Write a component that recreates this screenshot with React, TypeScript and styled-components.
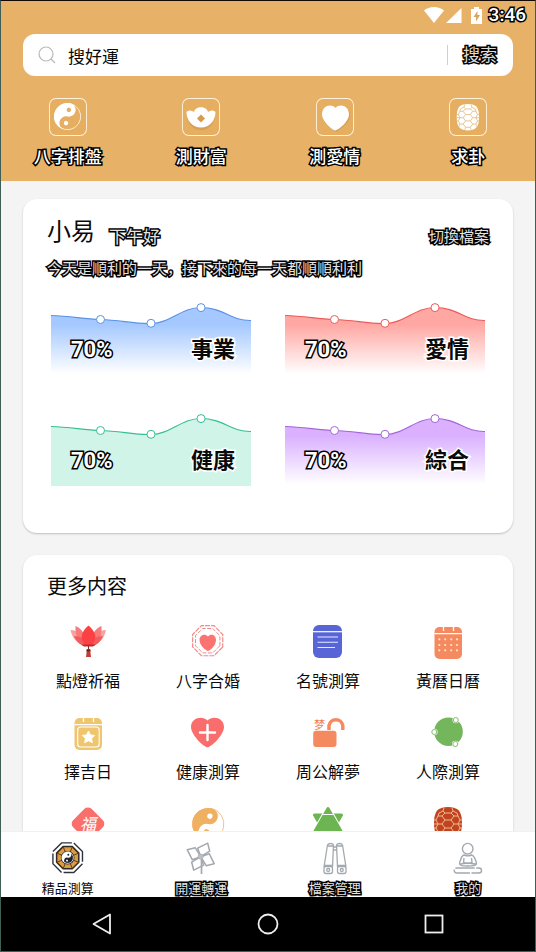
import React from "react";
import styled, { createGlobalStyle, css } from "styled-components";

const GlobalStyle = createGlobalStyle`
  * { box-sizing: border-box; }
  body {
    margin: 0;
    background: #f4f4f4;
    color: #0a0a0a;
    font-family: Roboto, "Noto Sans CJK SC", "Noto Sans CJK TC", sans-serif;
  }
  button, input { font: inherit; color: inherit; border: 0; padding: 0; margin: 0; background: none; }
  button { cursor: pointer; }
  svg { display: block; }
  h1, h2, p { margin: 0; font-weight: 400; }
`;

const outlined = css`
  -webkit-text-stroke: 3px #000;
  paint-order: stroke fill;
  stroke-linejoin: round;
`;

const Screen = styled.div`
  display: flex;
  flex-direction: column;
  height: 100vh;
  border: 1px solid #3f5e55;
  border-top-color: #140a04;
`;

const Header = styled.header`
  flex: none;
  background: #e7b267;
  padding-bottom: 12px;
`;

const StatusBar = styled.div`
  display: flex;
  align-items: center;
  justify-content: flex-end;
  height: 27px;
  padding-right: 9px;
`;

const StatusIcons = styled.svg`
  width: 60px;
  height: 18px;
  margin-right: 6px;
`;

const Clock = styled.time`
  font-size: 19px;
  font-weight: 500;
  line-height: 24px;
  color: #fff;
  ${outlined}
`;

const SearchBar = styled.form`
  display: flex;
  align-items: center;
  height: 42px;
  margin: 6px 22px 0;
  padding: 0 16px 0 15px;
  border-radius: 12px;
  background: #fff;
`;

const SearchInput = styled.input`
  flex: 1;
  min-width: 0;
  height: 32px;
  margin-left: 12px;
  font-size: 17px;
  outline: none;
`;

const SearchButton = styled.button`
  border-left: 1px solid #cfcfcf;
  height: 20px;
  padding-left: 15px;
  font-size: 17px;
  line-height: 20px;
  color: #ddd;
  ${outlined}
`;

const Shortcuts = styled.nav`
  display: grid;
  grid-template-columns: repeat(4, 1fr);
  margin-top: 22px;
`;

const Shortcut = styled.button`
  display: flex;
  flex-direction: column;
  align-items: center;
  gap: 9px;
  font-size: 17px;
  font-weight: 500;
  line-height: 24px;
  color: #fff;
  ${outlined}
`;

const Content = styled.main`
  flex: 1;
  min-height: 0;
  overflow-y: auto;
  scrollbar-width: none;
  display: flex;
  flex-direction: column;
  gap: 22px;
  padding: 18px 22px;
`;

const Card = styled.section`
  flex: none;
  border-radius: 14px;
  background: #fff;
  box-shadow: 0 1px 2px rgba(0, 0, 0, 0.22);
`;

const Greeting = styled.div`
  display: flex;
  align-items: flex-end;
  padding: 15px 24px 0;
  line-height: 26px;
`;

const UserName = styled.h1`
  font-size: 24px;
  line-height: 36px;
`;

const OutlinedText = styled.p<{ $size: number }>`
  font-size: ${(p) => p.$size}px;
  color: #e4e4e4;
  ${outlined}
`;

const Hello = styled(OutlinedText)`
  flex: 1;
  margin-left: 14px;
`;

const SwitchButton = styled.button`
  font-size: 15px;
  line-height: 26px;
  color: #e4e4e4;
  ${outlined}
`;

const Summary = styled(OutlinedText)`
  padding: 9px 24px 0;
  line-height: 20px;
`;

const ChartGrid = styled.div`
  display: grid;
  grid-template-columns: 1fr 1fr;
  gap: 35px 34px;
  padding: 21px 28px 46px;
`;

const ChartCell = styled.div`
  display: grid;
  > * { grid-area: 1 / 1; }
`;

const ChartCaption = styled.div`
  display: flex;
  justify-content: space-between;
  align-self: center;
  z-index: 1;
  padding: 24px 16px 0 20px;
  font-size: 22px;
  font-weight: 700;
  line-height: 28px;
`;

const Percent = styled.span`
  color: #fff;
  ${outlined}
`;

const Topic = styled.span`
  -webkit-text-stroke: 3px #fff;
  paint-order: stroke fill;
`;

const SectionTitle = styled.h2`
  padding: 18px 24px 0;
  font-size: 20px;
  line-height: 28px;
`;

const FeatureGrid = styled.div`
  display: grid;
  grid-template-columns: repeat(4, 1fr);
  row-gap: 20px;
  padding: 22px 5px;
`;

const Feature = styled.button`
  display: flex;
  flex-direction: column;
  align-items: center;
  gap: 11px;
  font-size: 16px;
  line-height: 24px;
`;

const TabBar = styled.nav`
  flex: none;
  display: grid;
  grid-template-columns: repeat(4, 1fr);
  padding-top: 9px;
  border-top: 1px solid #f0f0f0;
  background: #fff;
`;

const Tab = styled.button<{ $active?: boolean }>`
  display: flex;
  flex-direction: column;
  align-items: center;
  gap: 6px;
  font-size: 13px;
  line-height: 16px;
  ${(p) => (p.$active ? "" : css`color: #e4e4e4; ${outlined}`)}
`;

const SystemBar = styled.nav`
  flex: none;
  display: grid;
  grid-template-columns: 1fr 1fr 1fr;
  padding: 0 18px;
  height: 54px;
  background: #000;
`;

const SystemButton = styled.button`
  display: flex;
  align-items: center;
  justify-content: center;
`;

const Svg = ({ size, children }: { size: number; children: React.ReactNode }) => (
  <svg width={size} height={size} viewBox={`0 0 ${size} ${size}`} fill="none" aria-hidden="true">
    {children}
  </svg>
);

const octagon = (c: number, r: number) =>
  Array.from({ length: 8 }, (_, i) => {
    const a = ((i + 0.5) * Math.PI) / 4;
    return `${(c + r * Math.cos(a)).toFixed(2)},${(c + r * Math.sin(a)).toFixed(2)}`;
  }).join(" ");

const YinYang = ({ x, y, r, color, back }: { x: number; y: number; r: number; color: string; back: string }) => (
  <g transform={`translate(${x} ${y}) rotate(12)`}>
    <circle r={r - 0.3} stroke={color} strokeWidth={0.7} />
    <path
      d={`M0 ${-r}A${r} ${r} 0 0 0 0 ${r}A${r / 2} ${r / 2} 0 0 1 0 0A${r / 2} ${r / 2} 0 0 0 0 ${-r}Z`}
      fill={color}
    />
    <circle cy={-r / 2} r={r / 6} fill={back} />
    <circle cy={r / 2} r={r / 6} fill={color} />
  </g>
);

const Shell = ({ fill, line }: { fill: string; line: string }) => (
  <>
    <path d="M18 2c4 0 8 1 10.500 3C31 8 32 12 32 18s-1 11-4 14c-2 2-6 3-10 3s-8-1-10-3c-3-3-4-8-4-14s1-10 3.500-13C10 3 14 2 18 2Z" fill={fill} />
    <path
      d="M14 3l-1 3 2 2h6l2-2-1-3M15 8l-3 3 3 4h6l3-4-3-3M15 15l-3 4 3 4h6l3-4-3-4M15 23l-3 4 3 4h6l3-4-3-4M15 31l-1 3M21 31l1 3M12 11H8l-2 4 2 4h4M24 11h4l2 4-2 4h-4M8 19l-2 4 2 4h4M28 19l2 4-2 4h-4M13 6L9 8l-1 3M23 6l4 2 1 3M4 15h2M30 15h2M4 23h2M30 23h2M8 27l-1 3M28 27l1 3M8 19H4M28 19h4"
      stroke={line}
      strokeWidth="1"
      strokeLinejoin="round"
    />
  </>
);

const ShortcutFrame = ({ children }: { children: React.ReactNode }) => (
  <Svg size={38}>
    <rect x="1" y="1" width="36" height="36" rx="6" fill="#e5ae60" stroke="#fff3dd" strokeWidth="1.8" />
    {children}
  </Svg>
);

const shortcuts = [
  { label: "八字排盤", icon: <YinYang x={18.5} y={18.5} r={13.5} color="#fff" back="#e5ae60" /> },
  {
    label: "測財富",
    icon: (
      <>
        <path d="M5 15c2-3 5-3 7 0 1-8 13-8 14 0 2-3 5-3 7 0 0 8-5 16-14 16S5 23 5 15Z" fill="#c8924b" opacity=".5" transform="translate(0 1)" />
        <path d="M4.500 14c2-2 5-2 7.500 0 1-6.500 13-6.500 14 0 2.500-2 5.500-2 7.500 0 0 8-5.500 15.500-14.500 15.500S4.500 22 4.500 14Z" fill="#fff" />
        <path d="m19 16.500 4 4-4 4-4-4Z" fill="#d69b4c" />
      </>
    ),
  },
  {
    label: "測愛情",
    icon: (
      <>
        <path d="M20 34C14 30 6 24 6 17c0-8 10-10 14-4 4-6 14-4 14 4 0 7-8 13-14 17Z" fill="#c8924b" opacity=".6" />
        <path d="M19 32.500c-2 0-13-9-13-16C6 8 15 5 19.500 10 24 5 33 8 33 16.500c0 7-11 16-14 16Z" fill="#fff" />
      </>
    ),
  },
  {
    label: "求卦",
    icon: (
      <g transform="translate(4.500 4.500) scale(.8)">
        <Shell fill="#fff" line="#e5b878" />
      </g>
    ),
  },
];

const charts = [
  { label: "事業", line: "#5b93e6", top: "#a4c8ff", end: 0 },
  { label: "愛情", line: "#ec5a5a", top: "#ffa7a2", end: 0 },
  { label: "健康", line: "#35bf97", top: "#d0f4e8", end: 1 },
  { label: "綜合", line: "#a566dc", top: "#dab0ff", end: 0 },
];

const curve = "M0 15.500C20 16 32 19 49.500 19.500C70 20 82 24 100 23.500C120 23 130 7.500 150 7.500C172 7.500 180 21 200 20.500";

const TrendChart = ({ label, line, top, end }: (typeof charts)[number]) => (
  <ChartCell>
    <svg width="100%" viewBox="0 0 200 76" fill="none" aria-hidden="true">
      <defs>
        <linearGradient id={`fade-${label}`} x1="0" y1="0" x2="0" y2="1">
          <stop offset="0.250" stopColor={top} />
          <stop offset="0.980" stopColor={top} stopOpacity={end} />
        </linearGradient>
      </defs>
      <path d={`${curve}V75H0Z`} fill={`url(#fade-${label})`} />
      <path d={curve} stroke={line} strokeWidth="1.2" />
      {[[49.5, 19.5], [100, 23.3], [150, 7.6]].map(([x, y]) => (
        <circle key={x} cx={x} cy={y} r="4" fill="#fff" stroke={line} strokeWidth="1" />
      ))}
    </svg>
    <ChartCaption>
      <Percent>70%</Percent>
      <Topic>{label}</Topic>
    </ChartCaption>
  </ChartCell>
);

const features = [
  {
    label: "點燈祈福",
    icon: (
      <>
        <path d="M.5 7c8 0 13 6 13 15C6 20 2 14 .5 7ZM36 7c-8 0-13 6-13 15 8-2 11.500-8 13-15Z" fill="#f9a2a0" />
        <path d="M5.500 3C13 6 16 13 16 22 8 20 5 12 5.500 3ZM31.500 3C24 6 21 13 21 22c8-2 11-10 10.500-19Z" fill="#f77b7b" />
        <path d="M4 13c8 0 12 4 14 10-7 0-11-3-14-10ZM33 13c-8 0-12 4-14 10 7 0 11-3 14-10Z" fill="#f25c5d" />
        <path d="M18.500 2.500C24 7 26 12 25 16s-3 6.500-6.500 6.500S13 20 12 16s1-9 6.500-13.500Z" fill="#fb4144" />
        <path d="M11 21.500h15l-3 2h-9Z" fill="#bd282b" />
        <path d="M18.500 23v3" stroke="#7f2c25" />
        <path d="M17 26h3l1 8h-5Z" fill="#c23b35" />
        <path d="M16.500 27.500h4" stroke="#6d241d" strokeWidth="2" />
      </>
    ),
  },
  {
    label: "八字合婚",
    icon: (
      <>
        <polygon points={octagon(17.7, 16.3)} stroke="#f28a8a" strokeWidth="1.2" strokeDasharray="5 1" />
        <polygon points={octagon(17.7, 13.2)} stroke="#f28a8a" strokeWidth="1" strokeDasharray="4 1.500" />
        <path d="M18 28C15 27 9.500 22 9.500 17c0-5 5.500-7 8.500-3.500C21 10 26 12 26 17c0 5-5 10-8 11Z" fill="#fa7370" />
      </>
    ),
  },
  {
    label: "名號測算",
    icon: (
      <>
        <rect x="3" y="2" width="29" height="33" rx="6" fill="#5865d6" />
        <path d="M3 8.700h29" stroke="#fff" strokeWidth="1.200" />
        <path d="M7.500 14h20.500M7.500 19.300h20.500M7.500 24.500h17.500" stroke="#e6e8ff" strokeWidth="1.100" />
      </>
    ),
  },
  {
    label: "黃曆日曆",
    icon: (
      <>
        <rect x="4.500" y="4" width="27.500" height="32" rx="5" fill="#f58a61" />
        <path d="M4.500 10.700H32M13.500 3v5M23.500 3v5" stroke="#fff" strokeWidth="1.300" />
        {[16.3, 22, 27.3].map((y) => [9.3, 15.2, 21.2, 27].map((x) => <circle key={`${x}-${y}`} cx={x} cy={y} r="1.1" fill="#ffe6c9" />))}
      </>
    ),
  },
  {
    label: "擇吉日",
    icon: (
      <>
        <rect x="4.500" y="4" width="27.500" height="32" rx="5" fill="#efc66e" />
        <path d="M4.500 10.700H32M13.500 3v5M23.500 3v5" stroke="#fff" strokeWidth="1.300" />
        <rect x="7.700" y="13" width="21.500" height="20" rx="3" stroke="#fff" strokeWidth="1.100" />
        <path d="m18.500 17 1.900 3.900 4.200.6-3 3 .7 4.200-3.800-2-3.800 2 .7-4.200-3-3 4.200-.6Z" fill="#fff" stroke="#fff" strokeLinejoin="round" />
      </>
    ),
  },
  {
    label: "健康測算",
    icon: (
      <>
        <path d="M17.500 33.300C14 33.300 1 21 1 13 1 4 12 1 17.500 6.500 23 1 34 4 34 13c0 8-13 20.300-16.500 20.300Z" fill="#f96d6c" />
        <path d="M17.500 11v15M10 18.500h15" stroke="#fff" strokeWidth="2.400" strokeLinecap="round" />
      </>
    ),
  },
  {
    label: "周公解夢",
    icon: (
      <>
        <rect x="3.200" y="16.700" width="23.300" height="16.300" rx="3" fill="#f58a61" />
        <path d="M19 16v-4.500a7 7 0 0 1 13.800 0V16" stroke="#f58a61" strokeWidth="3.500" />
        <text x="4" y="14.500" fontSize="11" fill="#f07a50">梦</text>
      </>
    ),
  },
  {
    label: "人際測算",
    icon: (
      <>
        <circle cx="18.500" cy="17.700" r="14.300" fill="#74b65c" />
        {[[25.8, 6], [4.3, 18], [25.3, 30]].map(([x, y]) => (
          <g key={y}>
            <circle cx={x} cy={y} r="3.300" fill="#fff" />
            <circle cx={x} cy={y} r="2.500" fill="#fff" stroke="#74b65c" strokeWidth=".9" />
          </g>
        ))}
      </>
    ),
  },
  {
    name: "福",
    icon: (
      <>
        <rect x="5" y="5.700" width="26" height="26" rx="5" fill="#fa6e6c" transform="rotate(45 18 18.700)" />
        <text x="18" y="25" fontSize="16" fontStyle="italic" textAnchor="middle" fill="#fff">福</text>
      </>
    ),
  },
  { name: "太極", icon: <YinYang x={18.2} y={19} r={16} color="#f0b062" back="#fff" /> },
  {
    name: "星盤",
    icon: (
      <>
        <path d="M4.500 10h27L18 33.500Z" fill="#6cb552" stroke="#6cb552" strokeWidth="3" strokeLinejoin="round" />
        <path d="M18 3.500 31.500 27h-27Z" fill="#6cb552" stroke="#fff" strokeWidth="5" strokeLinejoin="round" />
        <path d="M18 3.500 31.500 27h-27Z" fill="#6cb552" stroke="#6cb552" strokeWidth="3" strokeLinejoin="round" />
        <path d="M12 9.500h12" stroke="#fff" strokeWidth="1" />
      </>
    ),
  },
  { name: "龜卦", icon: <Shell fill="#c0451f" line="#f3b595" /> },
];

const gray = "#a3a9b0";
const tabs = [
  {
    label: "精品測算",
    icon: (
      <>
        <polygon points={octagon(16.7, 16)} stroke="#2d3440" strokeWidth="1.400" strokeDasharray="22.500 2" />
        <polygon points={octagon(16.7, 12)} fill="#dc9c43" stroke="#2f2a24" strokeWidth="1.500" />
        <path d="M12 5.500l9.500 22.400M21.500 5.500 12 27.900M5.500 12l22.400 9.500M5.500 21.500 27.900 12" stroke="#5b3d1c" strokeWidth="1" />
        <circle cx="16.700" cy="16.700" r="6.800" fill="#20242c" />
        <YinYang x={16.7} y={16.7} r={6} color="#fff" back="#20242c" />
      </>
    ),
  },
  {
    label: "開運轉運",
    icon: (
      <>
        <g stroke={gray} strokeWidth="1.500" strokeLinejoin="round">
          {[0, 90, 180, 270].map((a) => (
            <path key={a} d="M0 0-3-8.500 7-13.500 9-5.500Z" transform={`translate(16.7 15.7) rotate(${a})`} />
          ))}
          <path d="M17.500 19v14" strokeWidth="1.700" />
        </g>
        <circle cx="16.700" cy="15.700" r="2.500" fill="#b9bec3" stroke={gray} />
      </>
    ),
  },
  {
    label: "檔案管理",
    icon: (
      <g stroke={gray} strokeWidth="1.300">
        <path d="M6 26 9.500 4c1-2 5-2 6 0l-1 22M28 26 24.500 4c-1-2-5-2-6 0l1 22M9.500 5h6M18.500 5h6M15.500 6h3M15.300 9h3.400M6.500 24.500h8M19.500 24.500h8" />
        <rect x="6" y="25.500" width="8.500" height="7" rx="2" />
        <rect x="19.500" y="25.500" width="8.500" height="7" rx="2" />
        <circle cx="10.200" cy="29" r="1.500" />
        <circle cx="23.800" cy="29" r="1.500" />
      </g>
    ),
  },
  {
    label: "我的",
    icon: (
      <g stroke={gray} strokeWidth="1.400" strokeLinejoin="round">
        <circle cx="16.700" cy="7.700" r="5.300" />
        <path d="M13 14c-3 1-3 4-4.500 8 0 3 3 3 8.200 3s8.800 0 8.800-3c-1.500-4-1.500-7-5-8-2 1-5 1-7.500 0ZM13 17l-.500 4.500 4.200 1 4.300-1L20.500 17M9.500 23l7-1 8 1" />
        <rect x="3.200" y="27" width="27.300" height="5" rx="2.500" strokeDasharray="18 1.500" />
      </g>
    ),
  },
];

export default function App() {
  return (
    <Screen lang="zh-Hans">
      <GlobalStyle />
      <Header>
        <StatusBar>
          <StatusIcons viewBox="0 0 60 18" fill="#fff" aria-hidden="true">
            <path d="M1 4.500C6-.2 16-.2 21 4.500L11 17Z" />
            <path d="M38.500 2v15H23Z" />
            <path d="M51 1h5v2h3v15H48V3h3Z" />
            <path d="M54.500 5 50.500 11h2.500v4.500l4-6.500h-2.500Z" fill="#d9a55e" />
          </StatusIcons>
          <Clock>3:46</Clock>
        </StatusBar>
        <SearchBar onSubmit={(e) => e.preventDefault()}>
          <svg width="18" height="18" viewBox="0 0 18 18" fill="none" stroke="#b9b9b9" strokeWidth="1.200" aria-hidden="true">
            <circle cx="8" cy="8" r="7" />
            <path d="m13 13 4 4" />
          </svg>
          <SearchInput aria-label="搜好運" defaultValue="搜好運" />
          <SearchButton type="submit">搜索</SearchButton>
        </SearchBar>
        <Shortcuts>
          {shortcuts.map((s) => (
            <Shortcut key={s.label} type="button">
              <ShortcutFrame>{s.icon}</ShortcutFrame>
              <span>{s.label}</span>
            </Shortcut>
          ))}
        </Shortcuts>
      </Header>

      <Content>
        <Card>
          <Greeting>
            <UserName>小易</UserName>
            <Hello $size={17}>下午好</Hello>
            <SwitchButton type="button">切換檔案</SwitchButton>
          </Greeting>
          <Summary $size={15}>今天是順利的一天，接下來的每一天都順順利利</Summary>
          <ChartGrid>
            {charts.map((c) => (
              <TrendChart key={c.label} {...c} />
            ))}
          </ChartGrid>
        </Card>

        <Card>
          <SectionTitle>更多内容</SectionTitle>
          <FeatureGrid>
            {features.map((f) => (
              <Feature key={f.label ?? f.name} type="button" aria-label={f.label ?? f.name}>
                <Svg size={36}>{f.icon}</Svg>
                {f.label && <span>{f.label}</span>}
              </Feature>
            ))}
          </FeatureGrid>
        </Card>
      </Content>

      <TabBar>
        {tabs.map((t, i) => (
          <Tab key={t.label} type="button" $active={i === 0}>
            <Svg size={34}>{t.icon}</Svg>
            <span>{t.label}</span>
          </Tab>
        ))}
      </TabBar>

      <SystemBar>
        <SystemButton type="button" aria-label="返回">
          <svg width="20" height="22" viewBox="0 0 20 22" fill="none" stroke="#eee" strokeWidth="1.800" strokeLinejoin="round">
            <path d="M18 1.500v19L1.500 11Z" />
          </svg>
        </SystemButton>
        <SystemButton type="button" aria-label="主頁">
          <svg width="22" height="22" viewBox="0 0 22 22" fill="none" stroke="#eee" strokeWidth="1.800">
            <circle cx="11" cy="11" r="9.500" />
          </svg>
        </SystemButton>
        <SystemButton type="button" aria-label="最近">
          <svg width="20" height="20" viewBox="0 0 20 20" fill="none" stroke="#eee" strokeWidth="1.800">
            <rect x="1.500" y="1.500" width="17" height="17" />
          </svg>
        </SystemButton>
      </SystemBar>
    </Screen>
  );
}
